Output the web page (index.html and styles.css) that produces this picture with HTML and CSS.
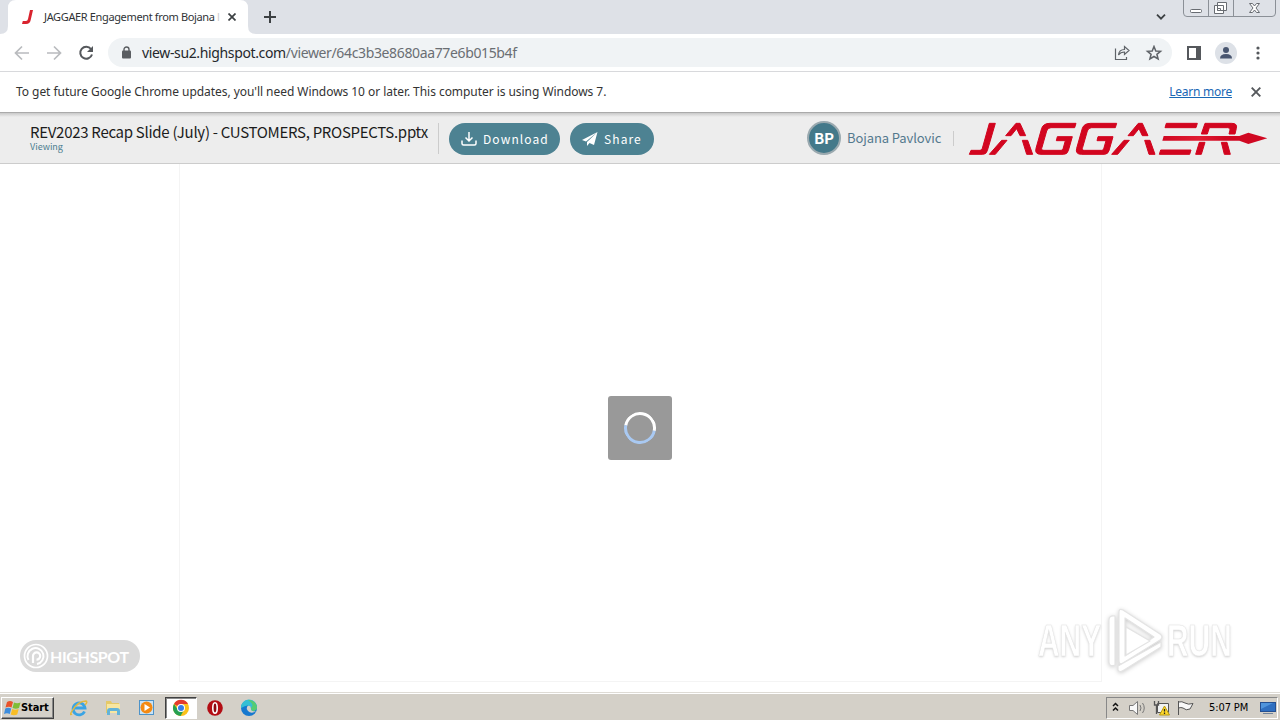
FILE: index.html
```html
<!DOCTYPE html>
<html lang="en">
<head>
<meta charset="utf-8">
<title>JAGGAER Engagement from Bojana</title>
<link rel="stylesheet" href="styles.css">
</head>
<body>
<div class="tabstrip">
  <svg class="tab-shape" width="264" height="34" viewBox="0 0 264 34"><path fill="#fff" d="M0 34Q8 34 8 26V8Q8 0 16 0H240Q248 0 248 8V26Q248 34 256 34Z"/></svg>
  <div class="tab">
    <svg width="12" height="14" viewBox="0 0 12 14"><path fill="#d9232e" d="M8 0H11L8.700 10Q8 14 4 14H0L.8 11H4Q5.600 11 6 9Z"/></svg>
    <span class="tab-title">JAGGAER Engagement from Bojana <span class="fade">l</span></span>
    <svg class="tab-close" width="8" height="8" viewBox="0 0 8 8"><path d="M.5.5l7 7m0-7l-7 7" stroke="#3c4043" stroke-width="1.700"/></svg>
  </div>
  <svg class="new-tab" width="12" height="12" viewBox="0 0 12 12"><path d="M6 0V12M0 6H12" stroke="#3c4043" stroke-width="2"/></svg>
  <svg class="tab-search" width="10" height="6" viewBox="0 0 10 6"><path d="M1 .7l4 4 4-4" fill="none" stroke="#3c4043" stroke-width="1.800"/></svg>
  <svg class="window-buttons" width="94" height="17" viewBox="0 0 94 17"><path d="M.5 0V13Q.5 16.500 4 16.500H89Q92.500 16.500 92.500 13V0M25.500 0V16M50.500 0V16" fill="none" stroke="#8b9097"/><g fill="#fff" stroke="#686c72"><rect x="7.500" y="9.500" width="11" height="3" rx="1"/><path d="M34.500 2.500h9v8h-9zM31.500 5.500h9v8h-9z"/><path d="M34.500 8.500h3v2h-3zM66.500 3.500h3l2 2.500 2-2.500h3l-3.500 4.500 3.500 4.500h-3l-2-2.500-2 2.500h-3l3.500-4.500z"/></g></svg>
</div>
<div class="toolbar">
  <svg class="nav" width="94" height="16" viewBox="0 0 94 16"><g fill="none" stroke="#b9bbbe" stroke-width="1.700"><path d="M15 8H2M8 1.500L1.500 8 8 14.500M33 8H46M40 1.500L46.500 8 40 14.500"/><path d="M77 4A6 6 0 1 0 78 9.500" stroke="#55585c" stroke-width="2"/></g><path d="M79 1V7H73Z" fill="#55585c"/></svg>
  <div class="omnibox">
    <svg width="10" height="13" viewBox="0 0 10 13"><rect x="1" y="4.500" width="9" height="8" rx="1" fill="#5a5d61"/><path d="M3 5V3.500a2.500 2.500 0 0 1 5 0V5" fill="none" stroke="#5a5d61" stroke-width="1.400"/></svg>
    <span class="url">view-su2.highspot.com<span class="path">/viewer/64c3b3e8680aa77e6b015b4f</span></span>
    <svg class="omni-icons" width="50" height="16" viewBox="0 0 50 16"><g fill="none" stroke="#5f6368"><path d="M1.500 3.500V14.500H12.500V12M4.500 10Q5 4.500 10.500 4.500V1.500L15 5.500 10.500 9.500V7Q6.500 7 4.500 10Z" stroke-width="1.200"/><path d="M40 1.500L41.800 6 46.500 6.300 42.900 9.300 44.100 14 40 11.500 35.900 14 37.100 9.300 33.500 6.300 38.200 6Z" stroke-width="1.500"/></g></svg>
  </div>
  <svg class="tool-icons" width="80" height="22" viewBox="0 0 80 22"><path fill="#55585c" fill-rule="evenodd" d="M1 4H15V18H1ZM3 6V16H10V6Z"/><circle cx="40" cy="11" r="11" fill="#dde1e7"/><circle cx="40" cy="8" r="3" fill="#495670"/><path d="M34 16.500Q34 12 40 12T46 16.500Z" fill="#495670"/><g fill="#55585c"><circle cx="72" cy="6" r="1.600"/><circle cx="72" cy="11" r="1.600"/><circle cx="72" cy="16" r="1.600"/></g></svg>
</div>
<div class="infobar">
  <span class="notice">To get future Google Chrome updates, you'll need Windows 10 or later. This computer is using Windows 7.</span>
  <span class="learn">Learn more</span>
  <svg width="10" height="10" viewBox="0 0 10 10"><path d="M.7.7l8.600 8.600m0-8.600L.7 9.300" stroke="#55585c" stroke-width="1.900"/></svg>
</div>
<div class="app-header">
  <div class="doc">
    <div class="doc-title">REV2023 Recap Slide (July) - CUSTOMERS, PROSPECTS.pptx</div>
    <div class="doc-status">Viewing</div>
  </div>
  <div class="rule tall"></div>
  <div class="button download">
    <svg width="16" height="16" viewBox="0 0 16 16"><path d="M8 1V10M4.500 6.500L8 10 11.500 6.500M1 9.500V12.500Q1 14 2.500 14H13.500Q15 14 15 12.500V9.500" fill="none" stroke="#fff" stroke-width="1.500"/></svg>
    <span>Download</span>
  </div>
  <div class="button share">
    <svg width="16" height="14" viewBox="0 0 16 14"><path d="M15.500 0L0 8 4 9.500ZM15.500 0L5 10V14L7.500 11 12 13Z" fill="#fff"/></svg>
    <span>Share</span>
  </div>
  <div class="avatar"><span>BP</span></div>
  <span class="owner">Bojana Pavlovic</span>
  <div class="rule short"></div>
  <svg class="logo" width="320" height="50" viewBox="0 9 960 150">
    <defs>
      <linearGradient id="beam"><stop stop-color="#d00822"/><stop offset=".35" stop-color="#e01c32"/><stop offset=".6" stop-color="#d00822"/></linearGradient>
      <path id="a" d="M137 77L168 40H180L197 77H180L170 56 153 77ZM125 91H141L106 133H88ZM187 91H203L218 133H200Z"/>
      <path id="g" d="M348 40H270Q250 40 245 55L228 115Q223 133 243 133H310Q322 133 325 122L337 80H292L289 92H316L309 117Q308 121 303 121H252Q242 121 246 112L260 63Q263 53 273 53H344Z"/>
    </defs>
    <g fill="#d2051f" stroke="#d2051f" stroke-width="3">
      <path d="M88 40H106L82 122Q79 133 68 133H28L33 121H60Q65 121 67 115Z"/>
      <use href="#a"/><use href="#g"/><use href="#g" x="122"/><use href="#a" x="367"/>
      <path d="M619 40H712L708 53H615ZM602 120H693L689 133H598Z"/>
      <path d="M735 40H815Q833 40 829 55L825 72H807L810 60Q812 53 803 53H748L742 72H724ZM718 97H735L724 133H707ZM784 97H801L811 133H793Z"/>
    </g>
    <path fill="url(#beam)" d="M611 78H838L865 68 922 85 865 102 838 92H607Z"/>
  </svg>
</div>
<div class="viewer">
  <div class="page"><div class="loader"><div class="ring"></div></div></div>
  <div class="highspot">
    <svg width="26" height="26" viewBox="0 0 26 26"><g fill="none" stroke="#fff"><circle cx="13" cy="13" r="11.500" stroke-width="1.700"/><path d="M5.500 17A8 8 0 1 1 14 21" stroke-width="2"/><path d="M10 20V13a3.600 3.600 0 1 1 3.500 3.600" stroke-width="2.200"/></g></svg>
    <span>HIGHSPOT</span>
  </div>
  <div class="watermark">
    <span class="any">ANY</span>
    <svg width="60" height="66" viewBox="0 0 60 66"><g fill="#fff" stroke="#e4e4e4" stroke-width="1.200" stroke-linejoin="round"><path fill-rule="evenodd" d="M13 4Q13 0 17 2L54 26Q58 29 54 32L17 55Q13 57 13 53ZM19 10V48L48 29Z"/><path d="M9 8Q3 7 3 12V54Q3 59 9 57ZM12 58V62Q14 65 18 62L55 39V34Z"/><path d="M20 19L44 33 20 47Z"/></g></svg>
    <span class="run">RUN</span>
  </div>
</div>
<div class="taskbar">
  <div class="start">
    <svg width="17" height="16" viewBox="0 0 17 16"><path d="M3 2Q6 0 9 2L7.500 7.500Q5 6 1.500 7.500Z" fill="#e9532b"/><path d="M10 2.500Q13 4 16.500 2.500L15 8Q12 9.500 8.500 8Z" fill="#7fbd36"/><path d="M1.300 8.500Q4 7 7.200 8.500L5.800 14Q3 12.500 0 14Z" fill="#3d8ddd"/><path d="M8.200 9Q11 10.500 14.700 9L13.200 14.500Q10 16 6.700 14.500Z" fill="#f8bd25"/></svg>
    <span>Start</span>
  </div>
  <div class="apps">
    <div class="app"><svg width="18" height="18" viewBox="0 0 18 18"><path d="M14.500 12.500A6 6 0 1 1 15 9H4" fill="none" stroke="#3aa4e4" stroke-width="2.800"/><path d="M2 15Q-1 17 2 12 8 2 16 2 18 3 15 6" fill="none" stroke="#e4b93c" stroke-width="1.400"/></svg></div>
    <div class="app"><svg width="18" height="18" viewBox="0 0 18 18"><path d="M2 2H7L8 4H15V14H2Z" fill="#e5c968"/><path d="M3 5H16V14H3Z" fill="#f8e6a0"/><path d="M3 16V12Q3 9 6 9H13Q16 9 16 12V16H13V12H6V16Z" fill="#63b3d8"/></svg></div>
    <div class="app"><svg width="18" height="18" viewBox="0 0 18 18"><rect x="1.500" y="1.500" width="14" height="14" fill="#c9e3f6" stroke="#4d93c9"/><circle cx="8.500" cy="8.500" r="6" fill="#f48a13"/><path d="M6.500 5V12L12 8.500Z" fill="#fff"/></svg></div>
    <div class="app active"><svg width="18" height="18" viewBox="0 0 18 18"><circle cx="9" cy="9" r="8" fill="#fbc11a"/><path d="M9 9L2 5A8 8 0 0 1 16 5H9Z" fill="#e33b2e"/><path d="M2 5A8 8 0 0 0 8.500 17L12 11H6Z" fill="#26a052"/><circle cx="9" cy="9" r="4" fill="#fff"/><circle cx="9" cy="9" r="3" fill="#377ee8"/></svg></div>
    <div class="app"><svg width="18" height="18" viewBox="0 0 18 18"><circle cx="9" cy="9" r="7.800" fill="#b30d14"/><ellipse cx="9" cy="9" rx="2.200" ry="5.200" fill="#8d0810" stroke="#fff" stroke-width="1.600"/></svg></div>
    <div class="app"><svg width="18" height="18" viewBox="0 0 18 18"><circle cx="9" cy="9" r="8" fill="#1678cf"/><path d="M1 9A8 8 0 0 1 17 8Q17 12 12 12 9 12 11 9 9 4 1 9Z" fill="#35bfd4"/><path d="M8 1.100A8 8 0 0 1 17 8Q17 12 12 12L11 9Q15 6 8 1.100Z" fill="#55cc72"/><path d="M7 8Q8 6 10.500 7.500L11 10Q10 12 16 12.500 11 15 8 12 6 10 7 8Z" fill="#d4d0c8"/></svg></div>
  </div>
  <div class="tray">
    <svg width="90" height="18" viewBox="0 0 90 18"><path d="M6 7L8.500 4.500 11 7M6 11.500L8.500 9 11 11.500" fill="none" stroke="#111" stroke-width="1.500"/><path d="M22.500 6.500H26L30.500 2.500V15.500L26 11.500H22.500Z" fill="#f8f8f8" stroke="#777"/><path d="M33 6Q35 9 33 12M35.500 4Q39 9 35.500 14" fill="none" stroke="#777"/><path d="M50.500 4.500H61.500V13.500H50.500Z" fill="#f0f2f3" stroke="#555"/><path d="M47.500 2V6H51.500V2M49.500 6V15" fill="none" stroke="#555" stroke-width="1.300"/><path d="M57.500 7L62.500 16H52.500Z" fill="#ffd829" stroke="#b89a10"/><path d="M57.500 10V12.500M57.500 13.500V15" stroke="#222" stroke-width="1.300"/><path d="M71.500 2V16M71.500 3Q75 2 78 4 81 6 86 4.500L83 10Q79 12 76 9 74 8 71.500 9" fill="#f8f8f8" stroke="#555"/></svg>
    <span class="clock">5:07 PM</span>
    <svg width="16" height="14" viewBox="0 0 16 14"><path d="M0 1H16V11H0Z" fill="#244f91"/><path d="M1 2H15V10H1Z" fill="#2f6fc0"/><path d="M1 2H13L1 8Z" fill="#4f94dc"/><path d="M3 12H13V13H3Z" fill="#71839a"/></svg>
  </div>
</div>
</body>
</html>
```
FILE: styles.css
```css
* { box-sizing: border-box; }
body { margin: 0; width: 1280px; height: 720px; overflow: hidden; display: flex; flex-direction: column; background: #fff; font-family: "DejaVu Sans Condensed", "DejaVu Sans", sans-serif; white-space: nowrap; }
svg { display: block; flex: none; }
.tabstrip { height: 34px; flex: none; background: #dee1e7; display: flex; position: relative; }
.tab-shape { position: absolute; left: 0; top: 0; }
.tab { position: relative; width: 248px; height: 34px; padding-left: 22px; display: flex; align-items: center; }
.tab-title { width: 176px; margin: -2px 0 0 10px; font-family: "Noto Sans", sans-serif; font-size: 11px; letter-spacing: -.36px; color: #303336; }
.fade { color: #ccc; }
.tab-close { margin-left: 8px; }
.new-tab { margin: 11px 0 0 16px; }
.tab-search { margin: 14px 0 0 auto; }
.window-buttons { margin: 0 3px 0 17px; }
.toolbar { height: 38px; flex: none; border-bottom: 1px solid #d8d9dc; display: flex; align-items: center; padding-left: 14px; }
.omnibox { width: 1064px; height: 29px; border-radius: 15px; background: #f0f3f5; display: flex; align-items: center; padding: 0 8px 0 13px; }
.url { margin-left: 11px; font-family: "Noto Sans", sans-serif; font-size: 14px; letter-spacing: -.36px; color: #25282c; }
.path { color: #6a6e73; }
.omni-icons { margin-left: auto; }
.tool-icons { margin-left: 14px; }
.infobar { height: 41px; flex: none; display: flex; align-items: center; padding: 0 19px 0 16px; color: #333; font-family: "Noto Sans", sans-serif; font-size: 12px; border-bottom: 1px solid #aaa; }
.notice { margin-top: -2px; letter-spacing: -.05px; }
.learn { margin: -2px 19px 0 auto; letter-spacing: -.25px; color: #1967b5; text-decoration: underline; }
.app-header { height: 51px; flex: none; background: linear-gradient(#c9c9c9, #ededed 4px); border-bottom: 1px solid #ccc; display: flex; align-items: center; font-family: "Noto Sans CJK SC", sans-serif; }
.doc { width: 408px; margin-left: 30px; padding-bottom: 2px; }
.doc-title { font-size: 15px; letter-spacing: -.29px; line-height: 19px; color: #1c1c1c; }
.doc-status { font-size: 9px; line-height: 11px; color: #4b7d90; }
.rule { width: 1px; background: #ccc; }
.tall { height: 31px; }
.short { height: 15px; margin-left: auto; }
.button { height: 32px; margin-top: 2px; border-radius: 16px; background: #4d8292; color: #fff; display: flex; align-items: center; font-size: 12px; letter-spacing: 1.1px; }
.button span { margin-top: -1px; }
.download { width: 111px; margin-left: 10px; padding-left: 12px; gap: 6px; }
.share { width: 84px; margin-left: 10px; padding-left: 12px; gap: 6px; }
.avatar { width: 34px; height: 34px; margin-left: 153px; border: 2px solid #9aa9af; border-radius: 50%; background: #44798a; color: #fff; font-size: 15px; font-weight: 700; display: flex; align-items: center; justify-content: center; }
.avatar span { margin-top: -2px; }
.owner { margin: -2px 0 0 6px; font-size: 13px; letter-spacing: -.1px; color: #54798d; }
.logo { margin-left: 6px; }
.viewer { height: 529px; flex: none; position: relative; padding-left: 179px; }
.page { width: 923px; height: 518px; border: 1px solid #f4f4f4; border-top: 0; padding: 232px 0 0 428px; }
.loader { width: 64px; height: 64px; border-radius: 3px; background: #999; display: flex; align-items: center; justify-content: center; }
.ring { width: 32px; height: 32px; border: 3px solid #fff; border-bottom-color: #a9c9f2; border-left-color: #a9c9f2; border-radius: 50%; transform: rotate(-35deg); }
.highspot { position: absolute; left: 20px; top: 476px; width: 120px; height: 32px; border-radius: 16px; background: #dadada; color: #fff; display: flex; align-items: center; padding-left: 3px; gap: 1px; font: 700 16px Lato, sans-serif; letter-spacing: -.4px; }
.watermark { position: absolute; left: 1038px; top: 444px; display: flex; align-items: center; font: 700 44px "Liberation Sans", sans-serif; color: #fff; -webkit-text-stroke: .6px #e5e5e5; text-shadow: 0 1px 3px #ccc; }
.watermark svg { margin: 0 1px 0 4px; filter: drop-shadow(0 1px 2px #ccc); }
.any, .run { display: block; width: 64px; line-height: 60px; transform: scaleX(.68); transform-origin: 0 50%; }
.taskbar { height: 28px; flex: none; margin-top: -1px; background: #d4d0c8; border-top: 1px solid #dedbd5; box-shadow: inset 0 1px #fff, 0 1px #d4d0c8; display: flex; align-items: center; padding: 2px 1px 0; }
.start { width: 53px; height: 22px; display: flex; align-items: center; padding-left: 2px; border: 1px solid; border-color: #fff #404040 #404040 #fff; box-shadow: inset -1px -1px #888; font: 700 11px "DejaVu Sans Condensed", sans-serif; letter-spacing: -.1px; }
.apps { display: flex; margin-left: 9px; gap: 2px; }
.app { width: 32px; height: 22px; display: flex; align-items: center; justify-content: center; }
.active { background: #fff; border: 1px solid; border-color: #404040 #fff #fff #404040; box-shadow: inset 1px 1px #888; }
.tray { width: 172px; height: 22px; margin: 0 1px 0 auto; border: 1px solid; border-color: #888 #fff #fff #888; display: flex; align-items: center; }
.clock { margin-left: 12px; width: 40px; font: 11px "DejaVu Sans Condensed", sans-serif; letter-spacing: -.1px; }
.tray svg:last-child { margin-left: 11px; }
```
